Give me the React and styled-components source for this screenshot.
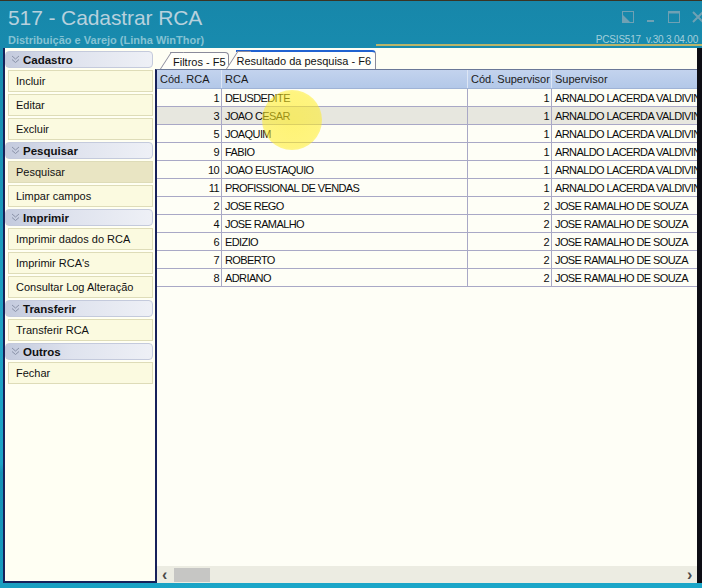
import styled, { createGlobalStyle } from "styled-components";

const GlobalStyle = createGlobalStyle`
  * { box-sizing: border-box; }
  html, body { margin: 0; padding: 0; background: #1a9cc0; }
  body { font-family: "Liberation Sans", Arial, sans-serif; font-size: 11px; }
`;

const menu = [
  { title: "Cadastro", items: ["Incluir", "Editar", "Excluir"] },
  { title: "Pesquisar", items: ["Pesquisar", "Limpar campos"], active: "Pesquisar" },
  { title: "Imprimir", items: ["Imprimir dados do RCA", "Imprimir RCA's", "Consultar Log Alteração"] },
  { title: "Transferir", items: ["Transferir RCA"] },
  { title: "Outros", items: ["Fechar"] },
];

const sup1 = "ARNALDO LACERDA VALDIVINO";
const sup2 = "JOSE RAMALHO DE SOUZA";

const rows = [
  [1, "DEUSDEDITE", 1, sup1],
  [3, "JOAO CESAR", 1, sup1],
  [5, "JOAQUIM", 1, sup1],
  [9, "FABIO", 1, sup1],
  [10, "JOAO EUSTAQUIO", 1, sup1],
  [11, "PROFISSIONAL DE VENDAS", 1, sup1],
  [2, "JOSE REGO", 2, sup2],
  [4, "JOSE RAMALHO", 2, sup2],
  [6, "EDIZIO", 2, sup2],
  [7, "ROBERTO", 2, sup2],
  [8, "ADRIANO", 2, sup2],
];

function Chevron() {
  return (
    <svg width="9" height="9" viewBox="0 0 9 9">
      <path d="M1 1 L4.5 4 L8 1 M1 4.5 L4.5 7.5 L8 4.5" fill="none" stroke="#8a92a8" strokeWidth="1" />
    </svg>
  );
}

function WindowControls() {
  return (
    <Controls>
      <svg width="12" height="12" viewBox="0 0 12 12">
        <rect x="0.5" y="0.5" width="11" height="11" fill="none" stroke="#7fa6b6" />
        <path d="M1 11 L1 4 L8 11 Z" fill="#7fa6b6" />
      </svg>
      <svg width="10" height="12" viewBox="0 0 10 12">
        <rect x="1" y="9" width="7" height="2" fill="#7fa6b6" />
      </svg>
      <svg width="12" height="12" viewBox="0 0 12 12">
        <rect x="0.5" y="0.5" width="11" height="11" fill="none" stroke="#7fa6b6" />
        <rect x="0.5" y="0.5" width="11" height="2" fill="#7fa6b6" />
      </svg>
      <svg width="12" height="12" viewBox="0 0 12 12">
        <path d="M1 1 L11 11 M11 1 L1 11" stroke="#7fa6b6" strokeWidth="2" />
      </svg>
    </Controls>
  );
}

export default function App() {
  return (
    <Window>
      <GlobalStyle />
      <TitleBar>
        <TitleBlock>
          <Title>517 - Cadastrar RCA</Title>
          <Subtitle>Distribuição e Varejo (Linha WinThor)</Subtitle>
        </TitleBlock>
        <TitleRight>
          <WindowControls />
          <Version>PCSIS517&nbsp;&nbsp;v.30.3.04.00</Version>
        </TitleRight>
        <GoldLine />
      </TitleBar>

      <Body>
        <SidePanel>
          {menu.map((group) => (
            <Group key={group.title}>
              <GroupHeader>
                <Chevron />
                <span>{group.title}</span>
              </GroupHeader>
              {group.items.map((item) => (
                <MenuItem key={item} $active={group.active === item}>
                  {item}
                </MenuItem>
              ))}
            </Group>
          ))}
        </SidePanel>

        <MainPanel>
          <TabBar>
            <Tab>Filtros - F5</Tab>
            <Tab $active>Resultado da pesquisa - F6</Tab>
          </TabBar>
          <GridFrame>
            <GridScroll>
              <HeaderRow>
                <HeadCell>Cód. RCA</HeadCell>
                <HeadCell>RCA</HeadCell>
                <HeadCell>Cód. Supervisor</HeadCell>
                <HeadCell>Supervisor</HeadCell>
              </HeaderRow>
              {rows.map((r, i) => (
                <Row key={r[0]} $selected={i === 1}>
                  <Cell $num>{r[0]}</Cell>
                  <Cell>{r[1]}</Cell>
                  <Cell $num>{r[2]}</Cell>
                  <Cell>{r[3]}</Cell>
                </Row>
              ))}
            </GridScroll>
            <HScroll>
              <ScrollArrow>‹</ScrollArrow>
              <Thumb />
              <Track />
              <ScrollArrow>›</ScrollArrow>
            </HScroll>
          </GridFrame>
        </MainPanel>
      </Body>
      <ClickSpot />
    </Window>
  );
}

const Window = styled.div`
  position: relative;
  width: 702px;
  height: 588px;
  overflow: hidden;
  display: flex;
  flex-direction: column;
  border-top: 1px solid #3a3424;
  background:
    linear-gradient(160deg, rgba(255, 255, 255, 0) 55%, rgba(10, 110, 150, 0.35) 56%, rgba(10, 110, 150, 0) 80%),
    linear-gradient(180deg, #1787aa 0%, #1ea2c4 55%, #1ba6c8 100%);
`;

const TitleBar = styled.div`
  position: relative;
  height: 47px;
  display: flex;
  justify-content: space-between;
  padding: 4px 0 0 8px;
`;

const TitleBlock = styled.div`
  display: flex;
  flex-direction: column;
`;

const Title = styled.div`
  font-size: 21px;
  line-height: 26px;
  color: #b7d1dd;
  letter-spacing: -0.1px;
`;

const Subtitle = styled.div`
  font-size: 11px;
  font-weight: bold;
  color: #84c2d3;
  margin-top: 3px;
`;

const TitleRight = styled.div`
  display: flex;
  flex-direction: column;
  align-items: flex-end;
  padding: 6px 4px 0 0;
  width: 130px;
`;

const Controls = styled.div`
  display: flex;
  align-items: center;
  gap: 12px;
  margin-right: -6px;
  opacity: 0.85;
`;

const Version = styled.div`
  margin-top: 11px;
  font-size: 10px;
  letter-spacing: -0.2px;
  color: #a3cfdb;
  white-space: nowrap;
`;

const GoldLine = styled.div`
  position: absolute;
  left: 376px;
  right: 0;
  bottom: 2px;
  height: 2px;
  background: #b9b56a;
`;

const Body = styled.div`
  flex: 1;
  display: flex;
  padding: 0 0 5px 3px;
  min-height: 0;
`;

const SidePanel = styled.div`
  width: 152px;
  background: #fffff3;
  border-left: 2px solid #17215a;
  border-bottom: 2px solid #17215a;
  padding: 3px 2px 0 0;
`;

const Group = styled.div`
  display: flex;
  flex-direction: column;
`;

const GroupHeader = styled.div`
  height: 17px;
  margin-bottom: 2px;
  display: flex;
  align-items: center;
  gap: 3px;
  padding-left: 5px;
  border: 1px solid #c4cadc;
  border-radius: 4px;
  background: linear-gradient(90deg, #c3cadd 0%, #dfe3ee 45%, #eef0f6 100%);
  font-weight: bold;
  font-size: 11.5px;
  color: #111;
`;

const MenuItem = styled.div`
  height: 22px;
  margin: 0 0 2px 3px;
  padding-left: 7px;
  display: flex;
  align-items: center;
  border: 1px solid #dedcb8;
  background: ${(p) => (p.$active ? "#e9e5c3" : "#fbfae0")};
  color: #111;
  font-size: 11px;
`;

const MainPanel = styled.div`
  flex: 1;
  display: flex;
  flex-direction: column;
  background: #fefef4;
  border-right: 5px solid #0d0d14;
  min-width: 0;
`;

const TabBar = styled.div`
  height: 21px;
  display: flex;
  align-items: flex-end;
  padding-left: 15px;
`;

const Tab = styled.div`
  position: relative;
  height: ${(p) => (p.$active ? "19px" : "17px")};
  display: flex;
  align-items: center;
  padding: ${(p) => (p.$active ? "1px 4px 0 1px" : "1px 2px 0 3px")};
  margin-left: ${(p) => (p.$active ? "7px" : "0")};
  background: #fffffa;
  border-top: ${(p) => (p.$active ? "2px solid #2062d0" : "1px solid #8a8a9a")};
  border-right: 1px solid #8a8a9a;
  border-top-right-radius: 4px;
  color: #111;
  font-size: 11px;
  z-index: ${(p) => (p.$active ? 2 : 1)};
  white-space: nowrap;

  &::before {
    content: "";
    position: absolute;
    top: -1px;
    bottom: 0;
    left: -10px;
    width: 12px;
    background: #fffffa;
    border-left: 1px solid #8a8a9a;
    border-top: 1px solid #8a8a9a;
    transform: skewX(-33deg);
    transform-origin: bottom left;
    z-index: -1;
  }
`;

const GridFrame = styled.div`
  flex: 1;
  display: flex;
  flex-direction: column;
  border-left: 2px solid #17215a;
  border-top: 1px solid #6a7898;
  min-height: 0;
`;

const GridScroll = styled.div`
  flex: 1;
  overflow: hidden;
  background: #fefef6;
`;

const cols = "65px 246px 84px 220px";

const HeaderRow = styled.div`
  display: grid;
  grid-template-columns: ${cols};
  height: 19px;
  background: linear-gradient(180deg, #c3d3ee 0%, #b3c8e8 100%);
  border-bottom: 1px solid #9fb3d6;
`;

const HeadCell = styled.div`
  padding-left: 3px;
  display: flex;
  align-items: center;
  border-right: 1px solid #dde6f5;
  color: #1a1a1a;
  white-space: nowrap;
  overflow: hidden;
`;

const Row = styled.div`
  display: grid;
  grid-template-columns: ${cols};
  height: 18px;
  border-bottom: 1px solid #a9a8c6;
  background: ${(p) => (p.$selected ? "#e7e7df" : "transparent")};
`;

const Cell = styled.div`
  display: flex;
  align-items: center;
  justify-content: ${(p) => (p.$num ? "flex-end" : "flex-start")};
  padding: 0 2px 0 3px;
  border-right: 1px solid #a9a8c6;
  color: #0c0c0c;
  letter-spacing: -0.6px;
  white-space: nowrap;
  overflow: hidden;
`;

const HScroll = styled.div`
  height: 17px;
  display: flex;
  align-items: center;
  padding: 0 2px 0 5px;
  background: #ecece2;
`;

const ScrollArrow = styled.div`
  width: 8px;
  font-size: 16px;
  font-weight: bold;
  line-height: 14px;
  color: #4a4a4a;
`;

const Thumb = styled.div`
  width: 36px;
  height: 14px;
  margin-left: 4px;
  background: #c6c6c4;
`;

const Track = styled.div`
  flex: 1;
`;

const ClickSpot = styled.div`
  position: absolute;
  left: 262px;
  top: 89px;
  width: 60px;
  height: 60px;
  border-radius: 50%;
  background: radial-gradient(circle, rgba(255, 236, 30, 0.6) 0%, rgba(255, 236, 30, 0.55) 65%, rgba(255, 236, 30, 0.2) 100%);
  pointer-events: none;
`;
